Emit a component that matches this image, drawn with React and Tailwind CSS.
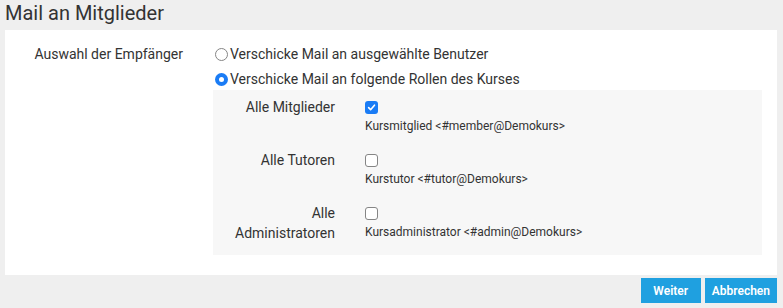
import React from "react";

function Radio({ checked }) {
  return checked ? (
    <span className="ml-[2px] mr-[2px] flex h-[13px] w-[13px] shrink-0 items-center justify-center rounded-full bg-[#1a7cf5]">
      <span className="h-[5px] w-[5px] rounded-full bg-white" />
    </span>
  ) : (
    <span className="ml-[2px] mr-[2px] h-[13px] w-[13px] shrink-0 rounded-full border border-[#858585] bg-white" />
  );
}

function Checkbox({ checked }) {
  return checked ? (
    <span className="flex h-[13px] w-[13px] items-center justify-center rounded-[3px] bg-[#1a7cf5]">
      <svg width="9" height="9" viewBox="0 0 10 10">
        <path d="M1.8 5.2 L4 7.4 L8.3 2.4" fill="none" stroke="white" strokeWidth="1.8" strokeLinecap="round" strokeLinejoin="round" />
      </svg>
    </span>
  ) : (
    <span className="h-[13px] w-[13px] rounded-[3px] border border-[#858585] bg-white" />
  );
}

function RoleRow({ label, checked, desc }) {
  return (
    <div className="flex">
      <div className="w-[137px] shrink-0 px-[15px] text-right text-[14px] leading-[20px]">{label}</div>
      <div className="pl-[15px]">
        <div className="flex h-[20px] items-center">
          <Checkbox checked={checked} />
        </div>
        <div className="text-[12px] leading-[19px]">{desc}</div>
      </div>
    </div>
  );
}

export default function App() {
  return (
    <div className="h-[308px] w-[783px] bg-[#efefef] pl-[5px] font-['Roboto',sans-serif] text-[#333]">
      <h1 className="h-[30px] text-[20px] leading-[26px]">Mail an Mitglieder</h1>
      <div className="flex w-[772px] bg-white pb-[20px] pt-[14px]">
        <div className="w-[193px] shrink-0 px-[15px] text-right text-[14px] leading-[20px]">Auswahl der Empfänger</div>
        <div className="flex-1 pl-[15px] pr-[15px]">
          <div className="flex flex-col gap-[5px] text-[14px] leading-[20px]">
            <div className="flex h-[20px] items-center">
              <Radio checked={false} />
              <span>Verschicke Mail an ausgewählte Benutzer</span>
            </div>
            <div className="flex h-[20px] items-center">
              <Radio checked={true} />
              <span>Verschicke Mail an folgende Rollen des Kurses</span>
            </div>
          </div>
          <div className="mt-[1px] flex flex-col gap-[14px] bg-[#f7f7f7] pb-[12px] pt-[7px]">
            <RoleRow label="Alle Mitglieder" checked={true} desc="Kursmitglied <#member@Demokurs>" />
            <RoleRow label="Alle Tutoren" checked={false} desc="Kurstutor <#tutor@Demokurs>" />
            <RoleRow label="Alle Administratoren" checked={false} desc="Kursadministrator <#admin@Demokurs>" />
          </div>
        </div>
      </div>
      <div className="flex w-[772px] justify-end gap-[4px] pt-[3px]">
        <button className="h-[25px] min-w-[60px] bg-[#1fa0e0] px-[7px] text-[12px] font-semibold text-white">Weiter</button>
        <button className="h-[25px] min-w-[60px] bg-[#1fa0e0] px-[7px] text-[12px] font-semibold text-white">Abbrechen</button>
      </div>
    </div>
  );
}
